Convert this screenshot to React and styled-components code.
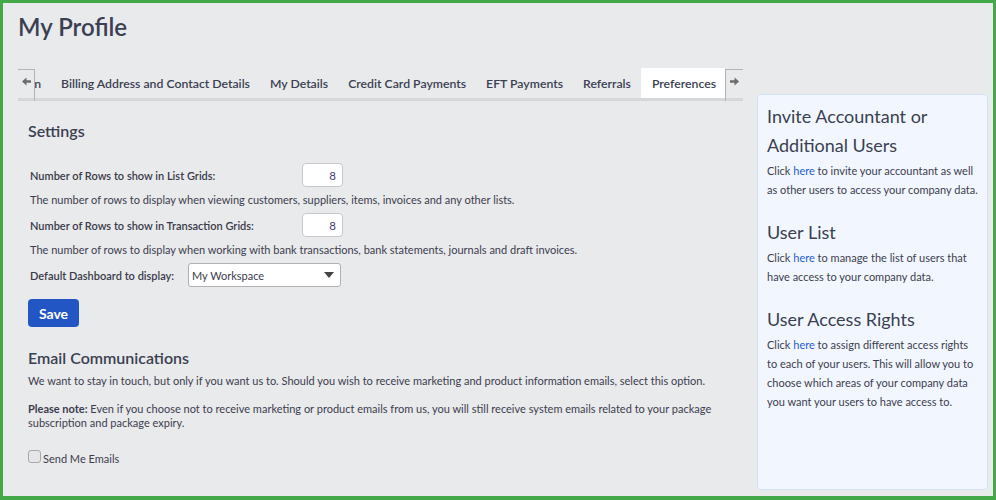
import React from "react";
import styled, { createGlobalStyle } from "styled-components";

const GlobalStyle = createGlobalStyle`
  html, body {
    margin: 0;
    padding: 0;
    font-family: Lato, "Open Sans", sans-serif;
    color: #3c3d4e;
  }
  * {
    box-sizing: border-box;
  }
`;

const TABS = [
  "Billing Address and Contact Details",
  "My Details",
  "Credit Card Payments",
  "EFT Payments",
  "Referrals",
  "Preferences",
];

const Arrow = ({ dir }) => (
  <svg width="9" height="9" viewBox="0 0 10 10">
    <path
      d="M0 5 L5 0.5 L5 3.5 L10 3.5 L10 6.5 L5 6.5 L5 9.5 Z"
      fill="#6b6b6b"
      transform={dir === "right" ? "rotate(180 5 5)" : undefined}
    />
  </svg>
);

const App = () => {
  return (
    <>
      <GlobalStyle />
      <Page>
        <Title>My Profile</Title>
        <Body>
          <Main>
            <TabBar>
              <ArrowBox $side="left">
                <Arrow dir="left" />
              </ArrowBox>
              <TabStrip>
                <ClippedTab>
                  <Tab>Subscription</Tab>
                </ClippedTab>
                {TABS.map((t) => (
                  <Tab key={t} $active={t === "Preferences"}>
                    {t}
                  </Tab>
                ))}
              </TabStrip>
              <ArrowBox $side="right">
                <Arrow dir="right" />
              </ArrowBox>
            </TabBar>

            <Content>
              <SectionTitle>Settings</SectionTitle>
              <FieldRow>
                <Label $width={272}>Number of Rows to show in List Grids:</Label>
                <NumberInput defaultValue="8" />
              </FieldRow>
              <Hint>
                The number of rows to display when viewing customers, suppliers,
                items, invoices and any other lists.
              </Hint>
              <FieldRow>
                <Label $width={272}>
                  Number of Rows to show in Transaction Grids:
                </Label>
                <NumberInput defaultValue="8" />
              </FieldRow>
              <Hint>
                The number of rows to display when working with bank
                transactions, bank statements, journals and draft invoices.
              </Hint>
              <FieldRow>
                <Label $width={158}>Default Dashboard to display:</Label>
                <Select>
                  <span>My Workspace</span>
                  <Caret />
                </Select>
              </FieldRow>
              <SaveButton>Save</SaveButton>

              <SectionTitle $top={21}>Email Communications</SectionTitle>
              <Para>
                We want to stay in touch, but only if you want us to. Should you
                wish to receive marketing and product information emails, select
                this option.
              </Para>
              <Note>
                <strong>Please note:</strong> Even if you choose not to receive
                marketing or product emails from us, you will still receive
                system emails related to your package subscription and package
                expiry.
              </Note>
              <CheckRow>
                <CheckBox />
                <span>Send Me Emails</span>
              </CheckRow>
            </Content>
          </Main>

          <Sidebar>
            <SideHeading>Invite Accountant or Additional Users</SideHeading>
            <SideText>
              Click <Link>here</Link> to invite your accountant as well as other
              users to access your company data.
            </SideText>
            <SideHeading $top={19}>User List</SideHeading>
            <SideText>
              Click <Link>here</Link> to manage the list of users that have
              access to your company data.
            </SideText>
            <SideHeading $top={19}>User Access Rights</SideHeading>
            <SideText>
              Click <Link>here</Link> to assign different access rights to each
              of your users. This will allow you to choose which areas of your
              company data you want your users to have access to.
            </SideText>
          </Sidebar>
        </Body>
      </Page>
    </>
  );
};

const Page = styled.div`
  height: 500px;
  border: 3px solid #43a847;
  border-bottom-width: 4px;
  background: #e9eaec;
  padding: 10px 5px 6px 15px;
  display: flex;
  flex-direction: column;
`;

const Title = styled.h1`
  margin: 0;
  font-size: 24px;
  line-height: 28px;
  font-weight: 600;
  color: #3a3f51;
`;

const Body = styled.div`
  flex: 1;
  margin-top: 27px;
  display: grid;
  grid-template-columns: 725px 231px;
  gap: 14px;
  min-height: 0;
`;

const Main = styled.div`
  display: flex;
  flex-direction: column;
`;

const TabBar = styled.div`
  display: flex;
  height: 33px;
  border-bottom: 3px solid #d6d7da;
`;

const ArrowBox = styled.div`
  width: ${(p) => (p.$side === "left" ? 17 : 18)}px;
  flex: none;
  border-top: 1px solid #b4b4b4;
  ${(p) => (p.$side === "left" ? "border-right" : "border-left")}: 1px solid #b4b4b4;
  margin-top: 1px;
  margin-bottom: -3px;
  display: flex;
  justify-content: center;
  align-items: flex-start;
  padding-top: 7px;
`;

const TabStrip = styled.div`
  flex: 1;
  display: flex;
  overflow: hidden;
`;

const ClippedTab = styled.div`
  width: 16px;
  flex: none;
  overflow: hidden;
  display: flex;
  justify-content: flex-end;
`;

const Tab = styled.div`
  flex: none;
  padding: 1px 10px 0 ${(p) => (p.$active ? 11 : 10)}px;
  height: 33px;
  display: flex;
  align-items: center;
  font-size: 12.25px;
  font-weight: 600;
  color: #3a3f51;
  white-space: nowrap;
  background: ${(p) => (p.$active ? "#ffffff" : "transparent")};
  border-bottom: 3px solid ${(p) => (p.$active ? "#2356c5" : "transparent")};
`;

const Content = styled.div`
  padding: 0 10px;
`;

const SectionTitle = styled.h2`
  margin: ${(p) => p.$top ?? 20}px 0 0;
  font-size: 16px;
  line-height: 20px;
  font-weight: 600;
  color: #3a3f51;
`;

const FieldRow = styled.div`
  display: flex;
  align-items: center;
  margin-top: 22px;
  padding-left: 2px;
`;

const Label = styled.label`
  width: ${(p) => p.$width}px;
  flex: none;
  font-size: 11px;
  font-weight: 600;
  color: #3a3a4a;
`;

const NumberInput = styled.input`
  width: 41px;
  height: 24px;
  border: 1px solid #c8c8cc;
  border-radius: 4px;
  background: #fff;
  text-align: right;
  padding: 0 6px;
  font-family: inherit;
  font-size: 11.5px;
  color: #4a3a6e;
`;

const Hint = styled.p`
  margin: 5px 0 0;
  padding-left: 2px;
  font-size: 11px;
  line-height: 16px;
  color: #3c3d4e;
  & + ${FieldRow} {
    margin-top: 5px;
  }
`;

const Select = styled.div`
  width: 153px;
  height: 24px;
  border: 1px solid #b0b0b4;
  border-radius: 3px;
  background: #fff;
  display: flex;
  align-items: center;
  justify-content: space-between;
  padding: 0 6px 0 3px;
  font-size: 11px;
  color: #3c3d4e;
`;

const Caret = styled.span`
  width: 0;
  height: 0;
  border-left: 5px solid transparent;
  border-right: 5px solid transparent;
  border-top: 6px solid #444;
`;

const SaveButton = styled.button`
  display: block;
  margin-top: 12px;
  width: 51px;
  height: 28px;
  border: none;
  border-radius: 4px;
  background: #2356c5;
  color: #fff;
  font-family: inherit;
  font-size: 14px;
  font-weight: 700;
`;

const Para = styled.p`
  margin: 5px 0 0;
  font-size: 11px;
  line-height: 16px;
`;

const Note = styled.p`
  margin: 13px 0 0;
  font-size: 11px;
  line-height: 14px;
  strong {
    font-weight: 700;
  }
`;

const CheckRow = styled.label`
  display: flex;
  align-items: center;
  gap: 2px;
  margin-top: 22px;
  font-size: 11px;
`;

const CheckBox = styled.span`
  width: 13px;
  height: 13px;
  border: 1px solid #a8a8a8;
  border-radius: 3px;
  background: #e6e6e8;
  margin-top: -4px;
`;

const Sidebar = styled.aside`
  margin-top: 26px;
  background: #f2f7ff;
  border: 1px solid #d2e1f6;
  border-radius: 4px;
  padding: 7px 9px 6px 9px;
`;

const SideHeading = styled.h3`
  margin: ${(p) => p.$top ?? 0}px 0 1px;
  font-size: 18px;
  line-height: 29px;
  font-weight: 400;
  color: #3a3f51;
`;

const SideText = styled.p`
  margin: 0;
  font-size: 11px;
  line-height: 19px;
  color: #3c3d4e;
`;

const Link = styled.a`
  color: #1f5cd1;
  cursor: pointer;
`;

export default App;
